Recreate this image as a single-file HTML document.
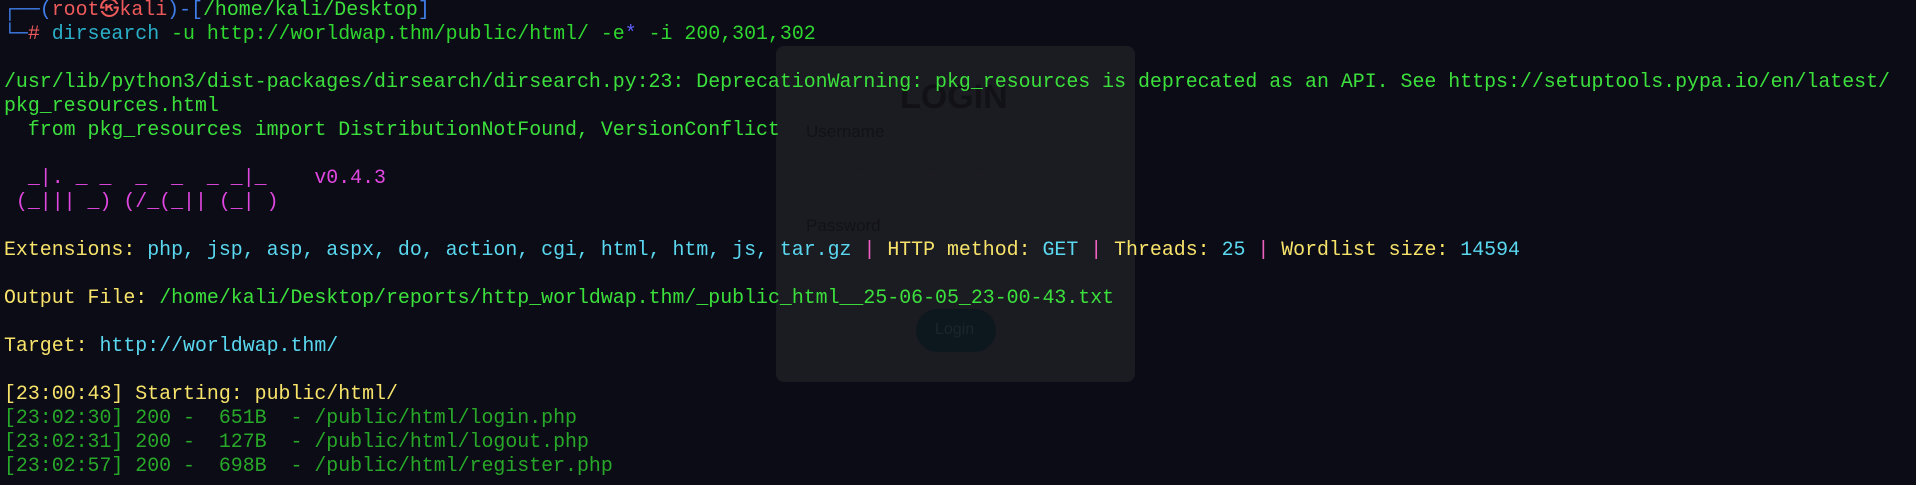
<!DOCTYPE html>
<html><head><meta charset="utf-8"><style>
html,body{margin:0;padding:0;background:#0c0c17;width:1916px;height:485px;overflow:hidden}
pre{position:absolute;left:4px;top:-2px;margin:0;font-family:"Liberation Mono",monospace;font-size:19.9px;line-height:24px;color:#3ce03c;white-space:pre}
.b{color:#3f7ee8}.r{color:#ee5a5a}.c{color:#2ab0c8}.g{color:#2fd62f}.y{color:#f7e36a}.cy{color:#5ad8f0}.m{color:#e046e0}.p{color:#f060c0}.d{color:#28a828}.bl{color:#5f5fff}
.panel{position:absolute;left:776px;top:46px;width:359px;height:336px;background:rgba(40,40,44,0.55);border-radius:8px}
.o{position:absolute;font-family:"Liberation Sans",sans-serif;color:#121216}
.btn{position:absolute;left:916px;top:309px;width:80px;height:43px;border-radius:22px;background:#0d181e}
</style></head><body>
<div class="panel"></div>
<div class="btn"></div>
<div class="o" style="left:900px;top:78px;font-size:34px;font-weight:bold">LOGIN</div>
<div class="o" style="left:806px;top:122px;font-size:17px">Username</div>
<div class="o" style="left:827px;top:165px;font-size:17px;color:#1c1c22">Enter your username</div>
<div class="o" style="left:806px;top:216px;font-size:17px">Password</div>
<div class="o" style="left:827px;top:259px;font-size:17px;color:#1c1c22">Enter your password</div>
<div class="o" style="left:935px;top:321px;font-size:16px;color:#1a262c">Login</div>
<pre><span class="b">┌──(</span><span class="r">root㉿kali</span><span class="b">)-[</span>/home/kali/Desktop<span class="b">]</span>
<span class="b">└─</span><span class="r">#</span> <span class="c">dirsearch</span> <span class="g">-u http://worldwap.thm/public/html/ -e</span><span class="bl">*</span><span class="g"> -i 200,301,302</span>

/usr/lib/python3/dist-packages/dirsearch/dirsearch.py:23: DeprecationWarning: pkg_resources is deprecated as an API. See https://setuptools.pypa.io/en/latest/
pkg_resources.html
  from pkg_resources import DistributionNotFound, VersionConflict

<span class="m">  _|. _ _  _  _  _ _|_    v0.4.3</span>
<span class="m"> (_||| _) (/_(_|| (_| )</span>

<span class="y">Extensions: </span><span class="cy">php, jsp, asp, aspx, do, action, cgi, html, htm, js, tar.gz</span> <span class="p">|</span> <span class="y">HTTP method: </span><span class="cy">GET</span> <span class="p">|</span> <span class="y">Threads: </span><span class="cy">25</span> <span class="p">|</span> <span class="y">Wordlist size: </span><span class="cy">14594</span>

<span class="y">Output File: </span>/home/kali/Desktop/reports/http_worldwap.thm/_public_html__25-06-05_23-00-43.txt

<span class="y">Target: </span><span class="cy">http://worldwap.thm/</span>

<span class="y">[23:00:43] Starting: public/html/</span>
<span class="d">[23:02:30] 200 -  651B  - /public/html/login.php</span>
<span class="d">[23:02:31] 200 -  127B  - /public/html/logout.php</span>
<span class="d">[23:02:57] 200 -  698B  - /public/html/register.php</span></pre>
</body></html>
